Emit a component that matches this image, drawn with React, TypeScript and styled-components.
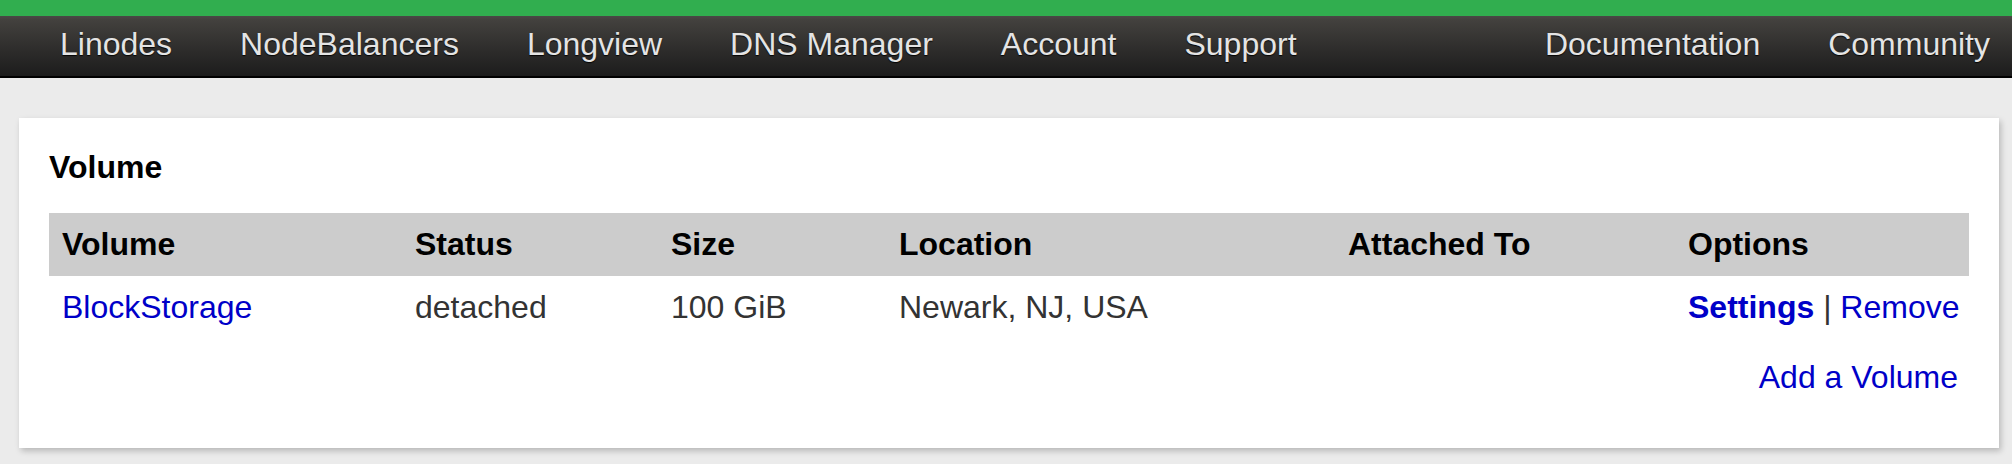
import React from "react";
import styled, { createGlobalStyle } from "styled-components";

const GlobalStyle = createGlobalStyle`
  html, body {
    margin: 0;
    padding: 0;
    background: #ebebeb;
    font-family: "Liberation Sans", Arial, Helvetica, sans-serif;
  }
`;

const Page = styled.div`
  min-height: 464px;
  background: #ebebeb;
`;

const TopStripe = styled.div`
  height: 16px;
  background: #31ae4f;
`;

const NavBar = styled.nav`
  height: 62px;
  box-sizing: border-box;
  display: flex;
  align-items: center;
  padding: 0 22px 3px 60px;
  background: linear-gradient(to bottom, #4a4846 0%, #43413e 6%, #2c2b2a 60%, #1c1c1c 100%);
  border-bottom: 2px solid #000;
`;

const NavGroup = styled.div<{ $right?: boolean }>`
  display: flex;
  align-items: center;
  gap: 68px;
  margin-left: ${(p) => (p.$right ? "auto" : "0")};
`;

const NavLink = styled.a`
  font-size: 32px;
  line-height: 37px;
  color: #e4e4e4;
  text-decoration: none;
  text-shadow: 0 1px 1px rgba(0, 0, 0, 0.9);
  white-space: nowrap;
`;

const Content = styled.main`
  padding: 40px 13px 0 19px;
`;

const Card = styled.section`
  background: #fff;
  padding: 31px 30px 52px;
  box-shadow: 2px 3px 6px rgba(0, 0, 0, 0.22);
`;

const Title = styled.h2`
  margin: 0 0 27px;
  font-size: 32px;
  line-height: 37px;
  font-weight: bold;
  color: #000;
`;

const Table = styled.table`
  width: 100%;
  border-collapse: collapse;
  table-layout: fixed;
`;

const HeadCell = styled.th`
  height: 63px;
  padding: 0 11px 0 13px;
  background: #cccccc;
  text-align: left;
  font-size: 32px;
  line-height: 37px;
  font-weight: bold;
  color: #000;
  white-space: nowrap;
`;

const Cell = styled.td`
  height: 63px;
  padding: 0 11px 0 13px;
  font-size: 32px;
  line-height: 37px;
  color: #333;
  white-space: nowrap;
`;

const Link = styled.a<{ $bold?: boolean }>`
  color: #0000c8;
  text-decoration: none;
  font-weight: ${(p) => (p.$bold ? "bold" : "normal")};
`;

const Sep = styled.span`
  color: #333;
`;

const Footer = styled.div`
  margin-top: 20px;
  padding-right: 11px;
  text-align: right;
  font-size: 32px;
  line-height: 37px;
`;

const columns = [353, 256, 228, 449, 340, 294];
const headers = ["Volume", "Status", "Size", "Location", "Attached To", "Options"];

export default function App() {
  return (
    <Page>
      <GlobalStyle />
      <TopStripe />
      <NavBar>
        <NavGroup>
          <NavLink>Linodes</NavLink>
          <NavLink>NodeBalancers</NavLink>
          <NavLink>Longview</NavLink>
          <NavLink>DNS Manager</NavLink>
          <NavLink>Account</NavLink>
          <NavLink>Support</NavLink>
        </NavGroup>
        <NavGroup $right>
          <NavLink>Documentation</NavLink>
          <NavLink>Community</NavLink>
        </NavGroup>
      </NavBar>
      <Content>
        <Card>
          <Title>Volume</Title>
          <Table>
            <colgroup>
              {columns.map((w, i) => (
                <col key={i} style={{ width: w }} />
              ))}
            </colgroup>
            <thead>
              <tr>
                {headers.map((h) => (
                  <HeadCell key={h}>{h}</HeadCell>
                ))}
              </tr>
            </thead>
            <tbody>
              <tr>
                <Cell>
                  <Link>BlockStorage</Link>
                </Cell>
                <Cell>detached</Cell>
                <Cell>100 GiB</Cell>
                <Cell>Newark, NJ, USA</Cell>
                <Cell></Cell>
                <Cell>
                  <Link $bold>Settings</Link> <Sep>|</Sep> <Link>Remove</Link>
                </Cell>
              </tr>
            </tbody>
          </Table>
          <Footer>
            <Link>Add a Volume</Link>
          </Footer>
        </Card>
      </Content>
    </Page>
  );
}
